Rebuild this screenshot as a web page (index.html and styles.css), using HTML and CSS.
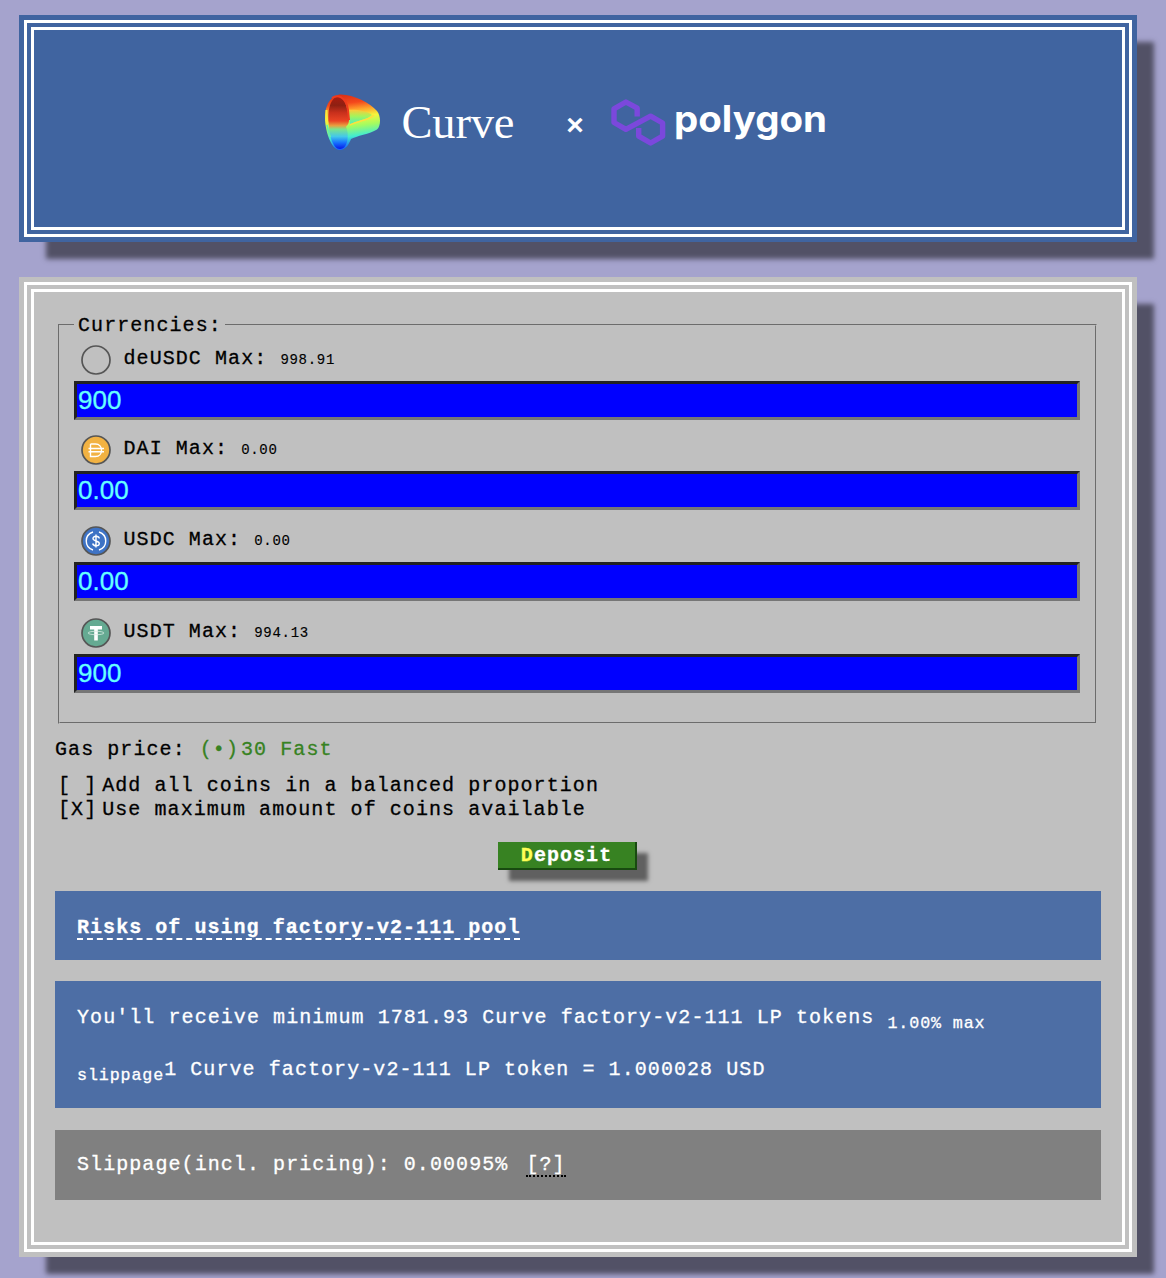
FILE: index.html
```html
<!DOCTYPE html>
<html lang="en">
<head>
<meta charset="utf-8">
<title>Curve – Deposit</title>
<link rel="stylesheet" href="styles.css">
</head>
<body>
<header class="window masthead">
  <svg class="curve-logo" width="200" height="60" viewBox="0 0 200 60">
    <defs>
      <linearGradient id="ring" x1="0" y1="0" x2="0.12" y2="1">
        <stop offset="0" stop-color="#d42a12"/><stop offset=".2" stop-color="#f4481c"/>
        <stop offset=".33" stop-color="#ffa52c"/><stop offset=".46" stop-color="#f4f63c"/>
        <stop offset=".62" stop-color="#a4fc60"/><stop offset=".8" stop-color="#42ecd0"/>
        <stop offset="1" stop-color="#1668ff"/>
      </linearGradient>
      <linearGradient id="hole" x1="0" y1="0" x2="0" y2="1">
        <stop offset="0" stop-color="#ffc838"/><stop offset=".45" stop-color="#a4f45c"/>
        <stop offset="1" stop-color="#4ef0b8"/>
      </linearGradient>
      <linearGradient id="mouth" x1="0" y1="0" x2="0" y2="1">
        <stop offset="0" stop-color="#a81c10"/><stop offset=".16" stop-color="#8e2012"/>
        <stop offset=".3" stop-color="#c8301c"/><stop offset=".46" stop-color="#ea4424"/>
        <stop offset=".55" stop-color="#e8a040"/><stop offset=".62" stop-color="#7be48c"/>
        <stop offset=".76" stop-color="#43c8ea"/><stop offset=".88" stop-color="#1671ff"/>
        <stop offset="1" stop-color="#0817e8"/>
      </linearGradient>
    </defs>
    <path fill="url(#ring)" d="M17 .6C30 .8 46 9 53 17c4 5 4 15 0 18.500C46 40 32 42 27 45c-2 5-5 11-11.500 11C7 56 1 36 1 24 1 10 8 .6 17 .6Z"/>
    <path fill="url(#hole)" d="M23 16c8-1 21 1 25 5-4 4-11 5-22 9Z"/>
    <path fill="none" stroke="#ffdf3e" stroke-width="1.500" d="M26 31c10-5 20-5 24-10"/>
    <path fill="url(#mouth)" d="M14 3c7 0 10 12 11 22 0 6-2 6-3 8 3 5 3 22-6 22C9 55 5 41 5 32 3 22 5 3 14 3Z"/>
    <path fill="none" stroke="#ef3a1d" stroke-width="2" d="M8 4C13 .5 22 2 24 16l1 10"/>
    <path fill="none" stroke="#f5ec3d" stroke-width="2" d="M2.500 16c-.5 6 0 10 1 14"/>
    <path fill="none" stroke="#62edb0" stroke-width="1.500" d="M3 31c1 6 2 9 3.500 12"/>
    <text class="curve-word" x="77.500" y="44.300" textLength="113">Curve</text>
  </svg>
  <span class="times">×</span>
  <svg class="polygon-logo" width="220" height="60" viewBox="0 0 220 60">
    <path fill="none" stroke="#7b48dc" stroke-width="5.400" stroke-linejoin="round" d="M27.200 22.500v-8.300L15.900 8 4 14.800v13.700l11.900 6.800L40.600 22.200l12 6.800v13.200L40.600 49l-11.900-6.800V34"/>
    <text class="polygon-word" x="64" y="38.300" textLength="153" lengthAdjust="spacingAndGlyphs">polygon</text>
  </svg>
</header>

<main class="window panel">
  <fieldset class="currencies">
    <legend>Currencies:</legend>
    <label class="coin" for="deusdc">
      <svg class="token" viewBox="0 0 30 30"><circle class="rim" cx="15" cy="15" r="14" fill="none"/></svg>
      <span>deUSDC Max: <small>998.91</small></span>
    </label>
    <input class="amount" id="deusdc" value="900">
    <label class="coin" for="dai">
      <svg class="token" viewBox="0 0 30 30"><circle class="rim" cx="15" cy="15" r="14" fill="#f2b242"/><path class="mark" d="M9.500 9h5c8 0 8 12.500 0 12.500h-5V9M7.500 13.500h15.500M7.500 16.800h15.500"/></svg>
      <span>DAI Max: <small>0.00</small></span>
    </label>
    <input class="amount" id="dai" value="0.00">
    <label class="coin" for="usdc">
      <svg class="token" viewBox="0 0 30 30"><circle class="rim" cx="15" cy="15" r="14" fill="#3e73c5"/><path class="mark" d="M12 6c-9 3-9 15 0 18M18 6c9 3 9 15 0 18M15 8.500v13M18.300 12.500c-.5-3-6.300-3-6.300 0s6.300 2 6.300 5-6 3-6.600 0"/></svg>
      <span>USDC Max: <small>0.00</small></span>
    </label>
    <input class="amount" id="usdc" value="0.00">
    <label class="coin" for="usdt">
      <svg class="token" viewBox="0 0 30 30"><circle class="rim" cx="15" cy="15" r="14" fill="#65aa92"/><path fill="#fff" d="M9 8h12v3.600h-4.200v10.900h-3.600V11.600H9Z"/><ellipse cx="15" cy="15" rx="8" ry="1.700" fill="none" stroke="#d9ece5" stroke-width=".8"/></svg>
      <span>USDT Max: <small>994.13</small></span>
    </label>
    <input class="amount" id="usdt" value="900">
  </fieldset>

  <div class="gas">Gas price: <span class="speed"><span class="radio">(•)</span>30 Fast</span></div>
  <div class="options">
    <div><span class="check">[ ]</span>Add all coins in a balanced proportion</div>
    <div><span class="check">[X]</span>Use maximum amount of coins available</div>
  </div>
  <button class="deposit"><span class="hotkey">D</span>eposit</button>

  <section class="notice risks"><a class="risk-link">Risks of using factory-v2-111 pool</a></section>
  <section class="notice receive">
    <div>You'll receive minimum 1781.93 Curve factory-v2-111 LP tokens <span class="sub">1.00% max</span></div>
    <div><span class="sub">slippage</span>1 Curve factory-v2-111 LP token = 1.000028 USD</div>
  </section>
  <section class="notice slippage">Slippage(incl. pricing): 0.00095% <span class="help">[?]</span></section>
</main>
</body>
</html>
```
FILE: styles.css
```css
* { box-sizing: border-box; }

body {
  margin: 0;
  padding: 20px 34px 26px 24px;
  height: 1278px;
  overflow: hidden;
  background: #a5a3cd;
  color: #000;
  font: 20px/26px "Liberation Mono", "Courier New", monospace;
  letter-spacing: 1.07px;
  -webkit-text-stroke: .3px currentColor;
}

.window {
  --face: #c0c0c0;
  border: 10px double #fff;
  background: var(--face);
  box-shadow: 0 0 0 5px var(--face), 22px 22px 5px rgba(0, 0, 0, .5);
}

.masthead {
  --face: #4064a0;
  display: flex;
  align-items: flex-start;
  height: 217px;
  padding: 64px 0 0 290px;
  color: #fff;
}
.curve-word { font: 46.500px "Liberation Serif", serif; letter-spacing: 0; fill: #fff; }
.polygon-word { font: 700 36.500px Inter, sans-serif; letter-spacing: 0; fill: #fff; }
.times { width: 26px; margin: 20px 0 0 38px; font: bold 30px/26px "Liberation Mono", monospace; letter-spacing: 0; text-align: center; -webkit-text-stroke: 0; }
.polygon-logo { margin-left: 22px; }

.panel { height: 970px; margin-top: 45px; padding: 20px 21px 42px; }

.currencies {
  margin: 0 4px 0 3px;
  padding: 0 15px 29px 14px;
  border: 2px groove #c0c0c0;
}
legend { height: 25px; padding: 0 3px 0 4px; line-height: 27px; }

.coin { display: flex; align-items: flex-end; gap: 13px; height: 44px; padding: 0 0 6px 6.500px; }
.coin:nth-of-type(2) { height: 51px; }
.coin:nth-of-type(3) { height: 52px; }
.coin:nth-of-type(4) { height: 53px; }
.coin small { margin-left: 0; font-size: 14px; letter-spacing: .700px; -webkit-text-stroke: .15px; }
.coin span { line-height: 30px; }
.token { width: 30px; height: 30px; }
.rim { stroke: #555; stroke-width: 1.700; }
.mark { fill: none; stroke: #fff; stroke-width: 1.400; }

.amount {
  display: block;
  width: 100%;
  height: 39px;
  padding: 0 1px;
  border: 3px solid;
  border-color: #222 #767676 #767676 #222;
  background: #00f;
  color: #6ff;
  font: 26px "Liberation Sans", Arial, sans-serif;
}

.gas { margin-top: 13px; }
.speed { margin-left: 1px; color: #378222; }
.radio { margin-right: 2px; }
.options { margin-top: 10.500px; line-height: 24.600px; }
.check { margin: 0 5px 0 3px; }

.deposit {
  display: block;
  width: 139px;
  height: 28px;
  margin: 19.500px 0 0 443px;
  padding: 2px 0 0;
  border: 0 solid #184a10;
  border-width: 0 2px 2px 0;
  background: #378222;
  box-shadow: 11px 11px 4px rgba(0, 0, 0, .5);
  color: #fff;
  font: bold 20px/24px "Liberation Mono", monospace;
  letter-spacing: 1.050px;
}
.hotkey { color: #ff5; }

.notice { padding: 0 22px; background: #4d6ea5; color: #fff; }
.risks { height: 69px; margin-top: 21px; padding-top: 24px; font-weight: bold; letter-spacing: 1.040px; }
.risk-link { display: inline-block; height: 25px; border-bottom: 2px dashed #fff; }
.receive { height: 127px; margin-top: 21px; padding-top: 11px; line-height: 52px; }
.sub { font-size: 16.700px; letter-spacing: .880px; line-height: 0; vertical-align: -5px; }
.slippage { height: 70px; margin-top: 22px; padding-top: 22px; background: #808080; }
.help { display: inline-block; height: 25px; margin-left: 5px; border-bottom: 2px dotted #000; }
```
